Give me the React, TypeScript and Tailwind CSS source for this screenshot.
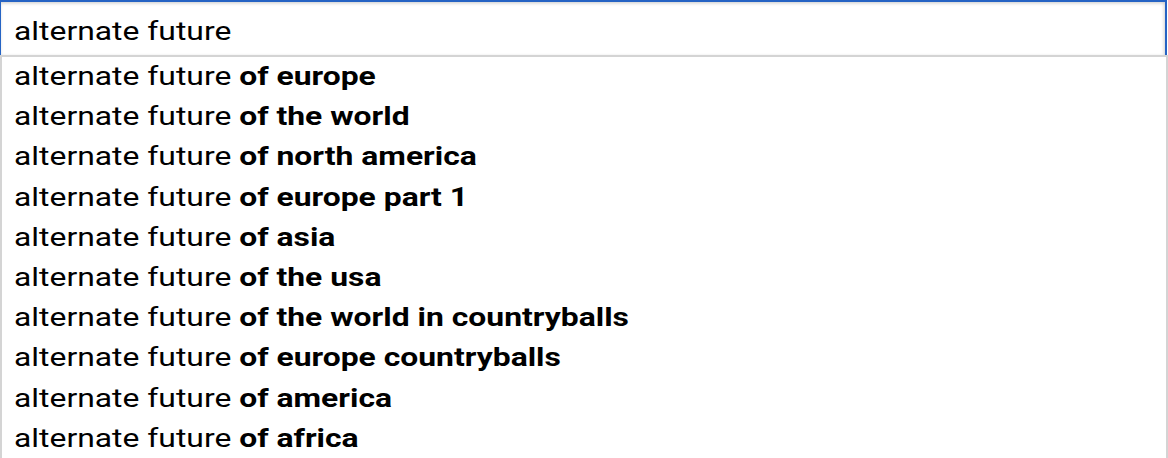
const suggestions = [
  'of europe',
  'of the world',
  'of north america',
  'of europe part 1',
  'of asia',
  'of the usa',
  'of the world in countryballs',
  'of europe countryballs',
  'of america',
  'of africa',
];

export default function App() {
  return (
    <div className="w-[1168px] h-[458px] overflow-hidden bg-white font-['Roboto',sans-serif] text-[26px] text-black">
      <div className="w-[1167px] h-[55px] border-t-2 border-l border-r-2 border-[#2563c4] shadow-[inset_0_2px_3px_rgba(0,0,0,0.12),inset_-2px_0_3px_rgba(0,0,0,0.08)] pl-[13px] pt-[13px] leading-[32px]">
        <div className="origin-left scale-x-[1.225] whitespace-nowrap">alternate future</div>
      </div>
      <div className="w-[1168px] border-t-2 border-l-2 border-r-2 border-[#d4d4d4] pl-[12px]">
        {suggestions.map(s => (
          <div key={s} className="h-[40.2px] leading-[38px] origin-left scale-x-[1.225] whitespace-nowrap">
            alternate future <span className="font-bold">{s}</span>
          </div>
        ))}
      </div>
    </div>
  );
}
